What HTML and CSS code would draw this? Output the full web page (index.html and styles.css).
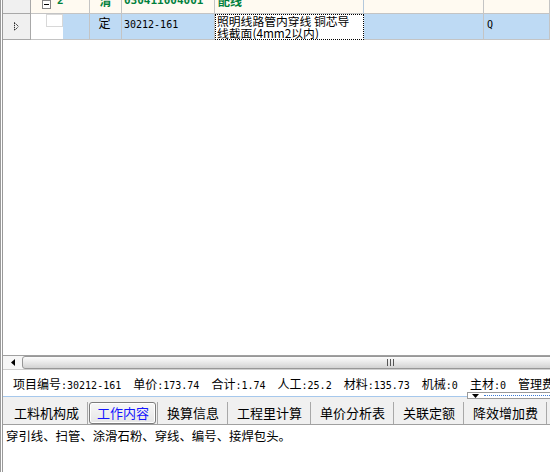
FILE: index.html
```html
<!DOCTYPE html>
<html lang="zh-CN">
<head>
<meta charset="utf-8">
<title>定额</title>
<link rel="stylesheet" href="styles.css">
</head>
<body>
<div class="win">
  <div class="grid">
    <div class="row r1">
      <div class="c ind"></div>
      <div class="c seq">
        <svg class="minus" width="9" height="9" viewBox="0 0 9 9"><rect x="0.5" y="0.5" width="8" height="8" fill="#fff" stroke="#848484"/><line x1="2" y1="4.5" x2="7" y2="4.5" stroke="#000"/></svg>
        <span class="t g n">2</span>
      </div>
      <div class="c typ"><span class="t g">清</span></div>
      <div class="c code"><span class="t g mono">030411004001</span></div>
      <div class="c name"><span class="t g">配线</span></div>
      <div class="c e6"></div>
      <div class="c e7"></div>
    </div>
    <div class="row r2">
      <div class="c ind">
        <svg width="5" height="9" viewBox="0 0 5 9"><path d="M0.5 0.5 L4.5 4.5 L0.5 8.5 Z" fill="none" stroke="#000" stroke-dasharray="1 1"/></svg>
      </div>
      <div class="c seq"><span class="tree"></span></div>
      <div class="c typ">定</div>
      <div class="c code"><span class="mono">30212-161</span></div>
      <div class="c name focus"><span class="ln">照明线路管内穿线 铜芯导</span><span class="ln">线截面(4mm2以内)</span></div>
      <div class="c e6"></div>
      <div class="c e7"><span class="mono">Q</span></div>
    </div>
  </div>

  <div class="hscroll">
    <div class="arrow">
      <svg width="4" height="7" viewBox="0 0 4 7"><path d="M4 0 L0 3.5 L4 7 Z" fill="#000"/></svg>
    </div>
    <div class="thumb">
      <svg class="grip" width="7" height="7" viewBox="0 0 7 7"><path d="M0.5 0v7M3.5 0v7M6.5 0v7" stroke="#555"/></svg>
    </div>
  </div>

  <div class="status">
    <span>项目编号<span class="v">:30212-161</span></span>
    <span>单价<span class="v">:173.74</span></span>
    <span>合计<span class="v">:1.74</span></span>
    <span>人工<span class="v">:25.2</span></span>
    <span>材料<span class="v">:135.73</span></span>
    <span>机械<span class="v">:0</span></span>
    <span>主材<span class="v">:0</span></span>
    <span>管理费<span class="v">:0</span></span>
  </div>

  <div class="tabs">
    <div class="tab"><span class="lbl">工料机构成</span></div>
    <div class="tab active"><span class="lbl">工作内容</span></div>
    <div class="tab"><span class="lbl">换算信息</span></div>
    <div class="tab"><span class="lbl">工程里计算</span></div>
    <div class="tab"><span class="lbl">单价分析表</span></div>
    <div class="tab"><span class="lbl">关联定额</span></div>
    <div class="tab"><span class="lbl">降效增加费</span></div>
  </div>

  <div class="content">穿引线、扫管、涂滑石粉、穿线、编号、接焊包头。</div>

  <div class="dd">
    <svg width="7" height="4" viewBox="0 0 7 4"><path d="M0 0 H7 L3.5 4 Z" fill="#000"/></svg>
    <span class="dots"></span>
  </div>
</div>
</body>
</html>
```

FILE: styles.css
```css
* { box-sizing: border-box; margin: 0; padding: 0; }

body {
  width: 550px;
  height: 472px;
  overflow: hidden;
  background: #fff;
  color: #000;
  font-family: "Noto Sans CJK SC", "Noto Sans", sans-serif;
  font-size: 12px;
}

.win {
  position: relative;
  height: 472px;
  display: flex;
  flex-direction: column;
  border-left: 3px double #9a9a9a;
}

/* ---------- grid ---------- */
.grid {
  flex: 1 1 auto;
  min-height: 0;
  overflow: hidden;
  background: #fff;
}

.row {
  display: grid;
  grid-template-columns: 28px 59px 32px 93px 149px 120px 1fr;
}

.c {
  border-right: 1px solid #c4c4c4;
  border-bottom: 1px solid #c4c4c4;
  overflow: hidden;
  white-space: nowrap;
}

.ind {
  background: #f0f0f0;
  border-color: #a8a8a8;
  display: flex;
  align-items: center;
  justify-content: center;
}

.mono {
  font-family: "DejaVu Sans Mono", "Liberation Mono", monospace;
  font-size: 10px;
}

.r1 {
  height: 14px;
  background: #fffaf1;
  line-height: 12px;
}

.r1 .t {
  display: block;
  margin-top: -5px;
}

.g {
  color: #00803c;
  font-weight: bold;
}

.r1 .mono { font-size: 11px; }

.r1 .seq {
  display: flex;
  align-items: flex-start;
  padding-left: 11px;
}

.r1 .seq .n {
  margin-left: 6px;
  font-family: "DejaVu Sans Mono", monospace;
  font-size: 11px;
}

.r1 .typ { text-align: center; }
.r1 .code { padding-left: 2px; }
.r1 .name { padding-left: 3px; border-right-color: #b4c8dc; }

.r2 {
  height: 26px;
  background: #bedaf4;
  line-height: 12px;
}

.r2 .seq {
  background: linear-gradient(to right, #fff 32px, transparent 32px);
  padding-left: 15px;
}

.tree {
  display: block;
  width: 17px;
  height: 13px;
  border: 1px solid #d8d8d8;
}

.r2 .typ {
  text-align: center;
  padding: 3px 2px 0 0;
}

.r2 .code {
  padding: 3px 0 0 2px;
}

.r2 .name.focus {
  background: #fff;
  border: 1px dotted #000;
  padding: 0 0 0 1px;
  display: flex;
  flex-direction: column;
}

.ln {
  display: block;
  height: 12px;
  line-height: 12px;
  font-size: 11.8px;
}

.r2 .e7 { padding: 3px 0 0 3px; }

/* ---------- horizontal scrollbar ---------- */
.hscroll {
  flex: none;
  height: 15px;
  border-top: 1px solid #a0a0a0;
  border-bottom: 1px solid #cfcfcf;
  background: #f6f6f6;
  display: flex;
  overflow: hidden;
}

.arrow {
  width: 19px;
  flex: none;
  display: flex;
  align-items: center;
  justify-content: center;
}

.thumb {
  flex: none;
  width: 700px;
  border: 1px solid #979797;
  border-radius: 3px;
  background: linear-gradient(#fcfcfc, #e4e4e4 60%, #d2d2d2);
  display: flex;
  align-items: center;
}

.grip { margin-left: 364px; }

/* ---------- status line ---------- */
.status {
  flex: none;
  height: 26px;
  display: flex;
  align-items: center;
  gap: 12px;
  padding-left: 10px;
  white-space: nowrap;
  overflow: hidden;
  font-size: 12px;
}

.status .v {
  font-family: "DejaVu Sans Mono", "Liberation Mono", monospace;
  font-size: 10px;
}

/* ---------- tabs ---------- */
.tabs {
  flex: none;
  height: 29px;
  border-top: 1px solid #a6c8ec;
  border-bottom: 1px solid #a0a0a0;
  background: #f0f0f0;
  display: flex;
  padding: 5px 0 0 2px;
}

.tab {
  height: 22px;
  padding: 0 1px;
  border-right: 1px solid #a8a8a8;
  flex: none;
}

.lbl {
  display: block;
  height: 22px;
  line-height: 19px;
  padding: 0 6px 0 7px;
  border: 1px solid transparent;
  font-size: 13px;
  white-space: nowrap;
}

.active .lbl {
  border-color: #7c7c7c;
  border-radius: 3px;
  color: #1414ff;
  background: linear-gradient(#f7f7f7, #e6e6e6);
  box-shadow: inset 0 0 0 1px #fff;
}

/* ---------- content ---------- */
.content {
  flex: none;
  height: 47px;
  padding: 4px 0 0 3px;
  font-size: 12.4px;
  line-height: 14px;
  white-space: nowrap;
}

/* ---------- splitter handle overlay ---------- */
.dd {
  position: absolute;
  left: 464px;
  top: 392px;
  width: 90px;
  height: 7px;
  border: 1px solid #9a9a9a;
  background: #fff;
  display: flex;
  align-items: center;
  padding-left: 4px;
}

.dots {
  flex: 1;
  margin-left: 5px;
  border-top: 1px dotted #3b7bd6;
}
```
